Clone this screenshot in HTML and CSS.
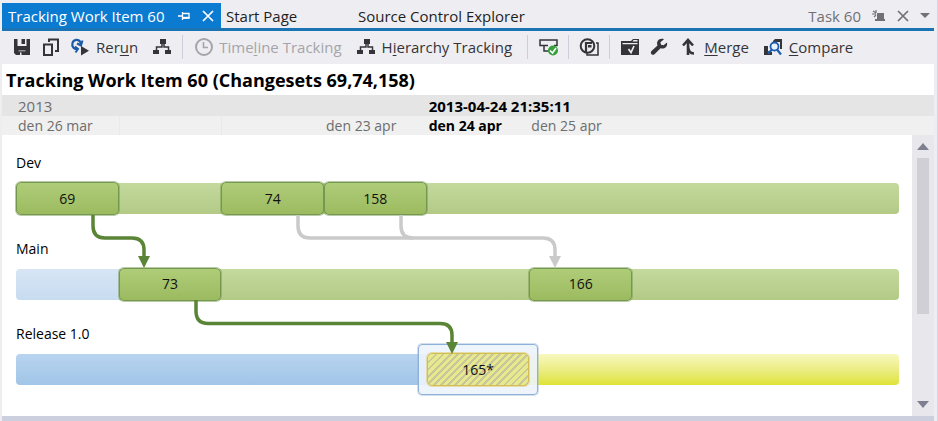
FILE: index.html
```html
<!DOCTYPE html>
<html lang="en">
<head>
<meta charset="utf-8">
<title>Tracking Work Item 60</title>
<link rel="stylesheet" href="styles.css">
</head>
<body>
<svg class="defs" aria-hidden="true">
  <symbol id="tree" viewBox="0 0 20 20">
    <path fill="currentColor" d="M8 2h6v5H8zM1 13h6v4H1zM13 13h6v4h-6z"/>
    <path fill="none" stroke="currentColor" stroke-width="1.500" d="M10 7v3H4.500v3.500M12 7v3h4.500v3.500"/>
  </symbol>
</svg>
<div class="window">
  <nav class="tabs">
    <div class="tab tab-active">
      <a href="#">Tracking Work Item 60</a>
      <button class="tab-button" aria-label="Pin">
        <svg width="12" height="10" viewBox="0 0 12 10"><path fill="none" stroke="currentColor" stroke-width="1.300" d="M0 5h4M4.500 1v8M5 2.500h6v4.500H5"/><path stroke="currentColor" stroke-width="1.800" d="M5 6.700h6.500"/></svg>
      </button>
      <button class="tab-button" aria-label="Close">
        <svg width="12" height="12" viewBox="0 0 12 12"><path fill="none" stroke="currentColor" stroke-width="1.700" d="M1 1l10 10M11 1L1 11"/></svg>
      </button>
    </div>
    <a class="tab tab-start" href="#">Start Page</a>
    <a class="tab" href="#">Source Control Explorer</a>
    <div class="preview">
      <a href="#">Task 60</a>
      <button class="tab-button" aria-label="Keep open">
        <svg width="14" height="12" viewBox="0 0 14 12"><path fill="currentColor" d="M5 3h7v6h1v2H3V9h2z"/><path fill="none" stroke="currentColor" stroke-width="1.200" d="M0 4h4M1 1l3 2M4 0v3M2 7l2-2"/></svg>
      </button>
      <button class="tab-button" aria-label="Close preview">
        <svg width="12" height="12" viewBox="0 0 12 12"><path fill="none" stroke="currentColor" stroke-width="1.700" d="M1 1l10 10M11 1L1 11"/></svg>
      </button>
      <button class="tab-button" aria-label="Open documents">
        <svg width="10" height="6" viewBox="0 0 10 6"><path fill="currentColor" d="M0 0h10L5 5z"/></svg>
      </button>
    </div>
  </nav>

  <div class="toolbar" role="toolbar">
    <button class="tool" aria-label="Save">
      <svg width="20" height="20" viewBox="0 0 20 20"><path fill="currentColor" d="M2 2h3.500v7h9V2H18v16H4l-2-2zM9.500 2H13v5H9.500z"/><path fill="#eeeef2" d="M6.500 13.500h7v.8h-7zM8 15.500h1.500V18H8z"/></svg>
    </button>
    <button class="tool" aria-label="Copy">
      <svg width="20" height="20" viewBox="0 0 20 20"><path fill="none" stroke="currentColor" stroke-width="2" d="M8 5V2.500h9V14h-3"/><path fill="none" stroke="currentColor" stroke-width="2" d="M3 7.500h8V18H3z"/></svg>
    </button>
    <button class="tool tool-text">
      <svg width="20" height="20" viewBox="0 0 20 20"><path fill="none" stroke="#1a5ca8" stroke-width="2.200" d="M7.500 12C4 12.500 1.500 9.500 2.500 6C3.500 2.500 8.500 1.500 10.500 5.500V7"/><path fill="none" stroke="#1a5ca8" stroke-width="2" d="M7 6.500l4 2 1.500-5M5 9.500l3 2.500-2.500 3.500"/><path fill="currentColor" d="M11 9l8 4.800-8 4.800z"/></svg>
      <span>Rer<u>u</u>n</span>
    </button>
    <button class="tool" aria-label="Show hierarchy"><svg width="20" height="20"><use href="#tree"/></svg></button>
    <span class="separator"></span>
    <button class="tool tool-text" disabled>
      <svg width="20" height="20" viewBox="0 0 20 20"><circle cx="11" cy="10" r="8" fill="none" stroke="currentColor" stroke-width="2"/><path fill="none" stroke="currentColor" stroke-width="1.600" d="M10.500 5v5.500H15"/></svg>
      <span>Time<u>l</u>ine Tracking</span>
    </button>
    <button class="tool tool-text">
      <svg width="20" height="20"><use href="#tree"/></svg>
      <span>H<u>i</u>erarchy Tracking</span>
    </button>
    <span class="separator"></span>
    <button class="tool" aria-label="Mark as reviewed">
      <svg width="20" height="20" viewBox="0 0 20 20"><path fill="none" stroke="currentColor" stroke-width="1.500" d="M10 8.500H2V3h17v5.500h-3M6 8.500v5.500h5"/><circle cx="15" cy="13.500" r="5" fill="#35a03c"/><path fill="none" stroke="#fff" stroke-width="1.600" d="M12 13.500l2.500 2.500L18 11"/></svg>
    </button>
    <span class="separator"></span>
    <button class="tool" aria-label="Filter branches">
      <svg width="20" height="20" viewBox="0 0 20 20"><path fill="none" stroke="currentColor" stroke-width="1.500" d="M17 6h2v12H8v-2"/><circle cx="8.500" cy="9" r="6.800" fill="none" stroke="currentColor" stroke-width="2"/><path fill="none" stroke="currentColor" stroke-width="2.200" d="M7 15V6h6"/><path fill="currentColor" d="M9 8h3.500v2.500H9z"/></svg>
    </button>
    <span class="separator"></span>
    <button class="tool" aria-label="Check in folder">
      <svg width="20" height="20" viewBox="0 0 20 20"><path fill="currentColor" fill-rule="evenodd" d="M1 4h10l2-2h6v16H1zM2.500 6v1.200h15V6zM13.500 3l-1 1.500h5V3z"/><path fill="none" stroke="#eeeef2" stroke-width="1.700" d="M8.500 12l2.500 3.500L14 9"/></svg>
    </button>
    <button class="tool" aria-label="Settings">
      <svg width="20" height="20" viewBox="0 0 20 20"><path fill="currentColor" d="M18 5.500l-3.500 2.800-2.500-.600-.600-2.500L15 2.200C12 1 8.300 2.500 8 6c0 1 .200 1.700.500 2.500L2.500 14c-2 2.500 1 5 3 3.200l6-6C14.500 12.300 19 10.500 18 5.500z"/></svg>
    </button>
    <button class="tool tool-text">
      <svg width="20" height="20" viewBox="0 0 20 20"><path fill="none" stroke="currentColor" stroke-width="2.600" d="M5 8.500l5-5.500 5 5.500M10 3v15M10 8c0 6 2 8.500 6 8.500"/></svg>
      <span><u>M</u>erge</span>
    </button>
    <button class="tool tool-text">
      <svg width="20" height="20" viewBox="0 0 20 20"><path fill="currentColor" d="M10 4l2-2h7v10h-2V5h-7zM1 9h4v5l4 1v3H1z"/><circle cx="11.500" cy="9.500" r="4" fill="#eaf3fb" stroke="#1f5fae" stroke-width="1.800"/><path fill="none" stroke="#1f5fae" stroke-width="2.200" d="M9 12.500l-4 4M14 12.500l4 5"/></svg>
      <span><u>C</u>ompare</span>
    </button>
  </div>

  <main class="document">
    <h1>Tracking Work Item 60 (Changesets 69,74,158)</h1>
    <div class="scale scale-year columns">
      <span class="from-1">2013</span>
      <strong class="from-5">2013-04-24 21:35:11</strong>
    </div>
    <div class="scale scale-day columns">
      <span class="from-1">den 26 mar</span>
      <span class="tick from-2"></span>
      <span class="tick from-3"></span>
      <span class="from-4">den 23 apr</span>
      <strong class="from-5">den 24 apr</strong>
      <span class="from-6">den 25 apr</span>
    </div>
    <div class="body">
      <div class="plot">
        <section class="branch">
          <h2>Dev</h2>
          <div class="track columns">
            <span class="bar bar-green from-1 to-end round-left round-right"></span>
            <button class="node from-1">69</button>
            <button class="node from-3">74</button>
            <button class="node from-4">158</button>
          </div>
        </section>
        <section class="branch">
          <h2>Main</h2>
          <div class="track columns">
            <span class="bar bar-pale from-1 round-left"></span>
            <span class="bar bar-green from-2 to-end round-right"></span>
            <button class="node from-2">73</button>
            <button class="node from-6">166</button>
          </div>
        </section>
        <section class="branch">
          <h2>Release 1.0</h2>
          <div class="track columns">
            <span class="bar bar-blue from-1 to-5 round-left"></span>
            <span class="bar bar-yellow from-5 to-end round-right"></span>
            <span class="selection from-5"></span>
            <button class="node node-pending from-5">165*</button>
          </div>
        </section>
        <svg class="links" viewBox="0 0 883 257" preserveAspectRatio="none" aria-hidden="true">
          <g class="link-idle">
            <path d="M282 80V91Q282 103 294 103H527Q539 103 539 115V122"/>
            <path d="M385 80V91Q385 103 397 103"/>
            <polygon points="533,121 545,121 539,133"/>
          </g>
          <g class="link-active">
            <path d="M77 80V91Q77 103 89 103H116Q128 103 128 115V122"/>
            <polygon points="122,121 134,121 128,133"/>
            <path d="M180 165V176Q180 188.500 192 188.500H424Q436 188.500 436 200V208"/>
            <polygon points="430,207 442,207 436,219"/>
          </g>
        </svg>
      </div>
      <div class="scrollbar">
        <button aria-label="Scroll up"><svg width="12" height="7" viewBox="0 0 12 7"><path fill="currentColor" d="M6 0l6 7H0z"/></svg></button>
        <span class="thumb"></span>
        <button aria-label="Scroll down"><svg width="12" height="7" viewBox="0 0 12 7"><path fill="currentColor" d="M0 0h12L6 7z"/></svg></button>
      </div>
    </div>
  </main>
</div>
</body>
</html>
```

FILE: styles.css
```css
* {
  box-sizing: border-box;
}

body {
  margin: 0;
  background: #eeeef2;
  color: #1e1e1e;
  font: 15px/20px "Open Sans", "Noto Sans", sans-serif;
}

a {
  color: inherit;
  text-decoration: none;
}

button {
  margin: 0;
  padding: 0;
  border: 0;
  background: none;
  color: inherit;
  font: inherit;
}

svg {
  display: block;
  flex: none;
}

.defs {
  position: absolute;
  width: 0;
  height: 0;
}

.window {
  display: flex;
  flex-direction: column;
  min-height: 100vh;
  padding: 3px 3px 0 2px;
  border-right: 1px solid #d3d6e4;
}

/* Document tabs */

.tabs {
  display: flex;
  align-items: stretch;
  height: 28px;
  border-bottom: 3px solid #1a74b4;
  white-space: nowrap;
}

.tab {
  padding: 3px 5px;
}

.tab-active {
  display: flex;
  align-items: center;
  gap: 12px;
  width: 219px;
  padding: 0 7px 0 6px;
  background: #0a7bd0;
  color: #fff;
}

.tab-active a {
  flex: 1;
}

.tab-start {
  width: 132px;
}

.tab-button {
  display: flex;
}

.preview {
  display: flex;
  align-items: center;
  gap: 11px;
  margin-left: auto;
  padding-right: 4px;
  color: #717175;
}

/* Toolbar */

.toolbar {
  display: flex;
  align-items: center;
  gap: 1px;
  height: 33px;
  padding: 0 0 2px 6px;
  white-space: nowrap;
}

.tool {
  display: flex;
  align-items: center;
  gap: 6px;
  padding: 0 4px;
  color: #353539;
}

.tool-text {
  padding-right: 9px;
}

.tool:disabled {
  color: #a5a5a9;
}

.tool u {
  text-underline-offset: 2px;
}

.separator {
  width: 1px;
  height: 24px;
  margin: 0 5px;
  background: #cccedb;
}

/* Document */

.document {
  display: flex;
  flex: 1;
  flex-direction: column;
  background: #fff;
  border-bottom: 5px solid #cccfdd;
}

h1 {
  margin: 0;
  padding: 1px 4px 0;
  color: #000;
  font-size: 18px;
  line-height: 30px;
}

.columns {
  display: grid;
  grid-template-columns: repeat(6, minmax(0, 5fr)) minmax(0, 13fr);
}

.scale {
  padding: 0 35px 0 14px;
  color: #6d6d6d;
  white-space: nowrap;
}

.scale > * {
  padding-left: 2px;
}

.scale strong {
  color: #000;
}

.scale-year {
  height: 21px;
  background: #e5e5e5;
  line-height: 22px;
}

.scale-day {
  height: 19px;
  background: #f0f0f0;
  font-size: 14px;
  line-height: 19px;
}

.tick {
  border-left: 1px solid #e9e9e9;
}

.body {
  display: flex;
  flex: 1;
}

.plot {
  position: relative;
  display: grid;
  flex: 1;
  grid-template-rows: repeat(3, 1fr);
  margin: 0 13px 24px 14px;
}

.branch {
  padding-top: 18px;
}

.branch h2 {
  margin: 0 0 9px;
  color: #000;
  font-size: 14px;
  font-weight: 400;
  line-height: 20px;
}

.track {
  height: 33px;
}

.track > * {
  grid-row: 1;
}

.bar {
  margin: 1px 0;
}

.bar-green {
  background: linear-gradient(#c4d99d, #b3ca86);
}

.bar-pale {
  background: linear-gradient(#d7e5f5, #c8dcf0);
}

.bar-blue {
  background: linear-gradient(#b8d4f0, #a1c5e7);
}

.bar-yellow {
  background: linear-gradient(#f8f8c0, #e9eb78 60%, #dfe336);
}

.round-left {
  border-radius: 4px 0 0 4px;
}

.round-right {
  border-radius: 0 4px 4px 0;
}

.round-left.round-right {
  border-radius: 4px;
}

.node {
  border: 1px solid #749850;
  border-radius: 5px;
  background: linear-gradient(#afcc78, #9cbb60);
  box-shadow: 0 0 0 1px rgba(116, 152, 80, 0.5);
  color: #111;
  font-size: 14px;
}

.node-pending {
  z-index: 1;
  border-color: #d3bd55;
  background: repeating-linear-gradient(135deg, #c8c79c 0 2px, #e8e88c 2px 5px);
  box-shadow: 0 0 0 1px rgba(220, 196, 90, 0.5);
}

.selection {
  z-index: 1;
  margin: -9px;
  border: 1px solid #8fb0d8;
  border-radius: 4px;
  background: rgba(236, 243, 251, 0.9);
  box-shadow: 0 0 0 1px rgba(143, 176, 216, 0.4);
}

.from-1 { grid-column-start: 1; }
.from-2 { grid-column-start: 2; }
.from-3 { grid-column-start: 3; }
.from-4 { grid-column-start: 4; }
.from-5 { grid-column-start: 5; }
.from-6 { grid-column-start: 6; }
.to-5 { grid-column-end: 5; }
.to-end { grid-column-end: -1; }

.links {
  position: absolute;
  z-index: 2;
  inset: 0;
  width: 100%;
  height: 100%;
  pointer-events: none;
}

.links path {
  fill: none;
  stroke-width: 3.5;
}

.link-idle {
  fill: #cacaca;
  stroke: #cacaca;
}

.link-active {
  fill: #5a8436;
  stroke: #5a8436;
}

.links polygon {
  stroke: none;
}

/* Scroll bar */

.scrollbar {
  display: flex;
  flex-direction: column;
  align-items: center;
  gap: 8px;
  width: 22px;
  padding: 8px 0;
  background: #e8e8ec;
  color: #7e8092;
}

.thumb {
  width: 12px;
  height: 59%;
  margin-bottom: auto;
  background: #cfcfd5;
}
```
